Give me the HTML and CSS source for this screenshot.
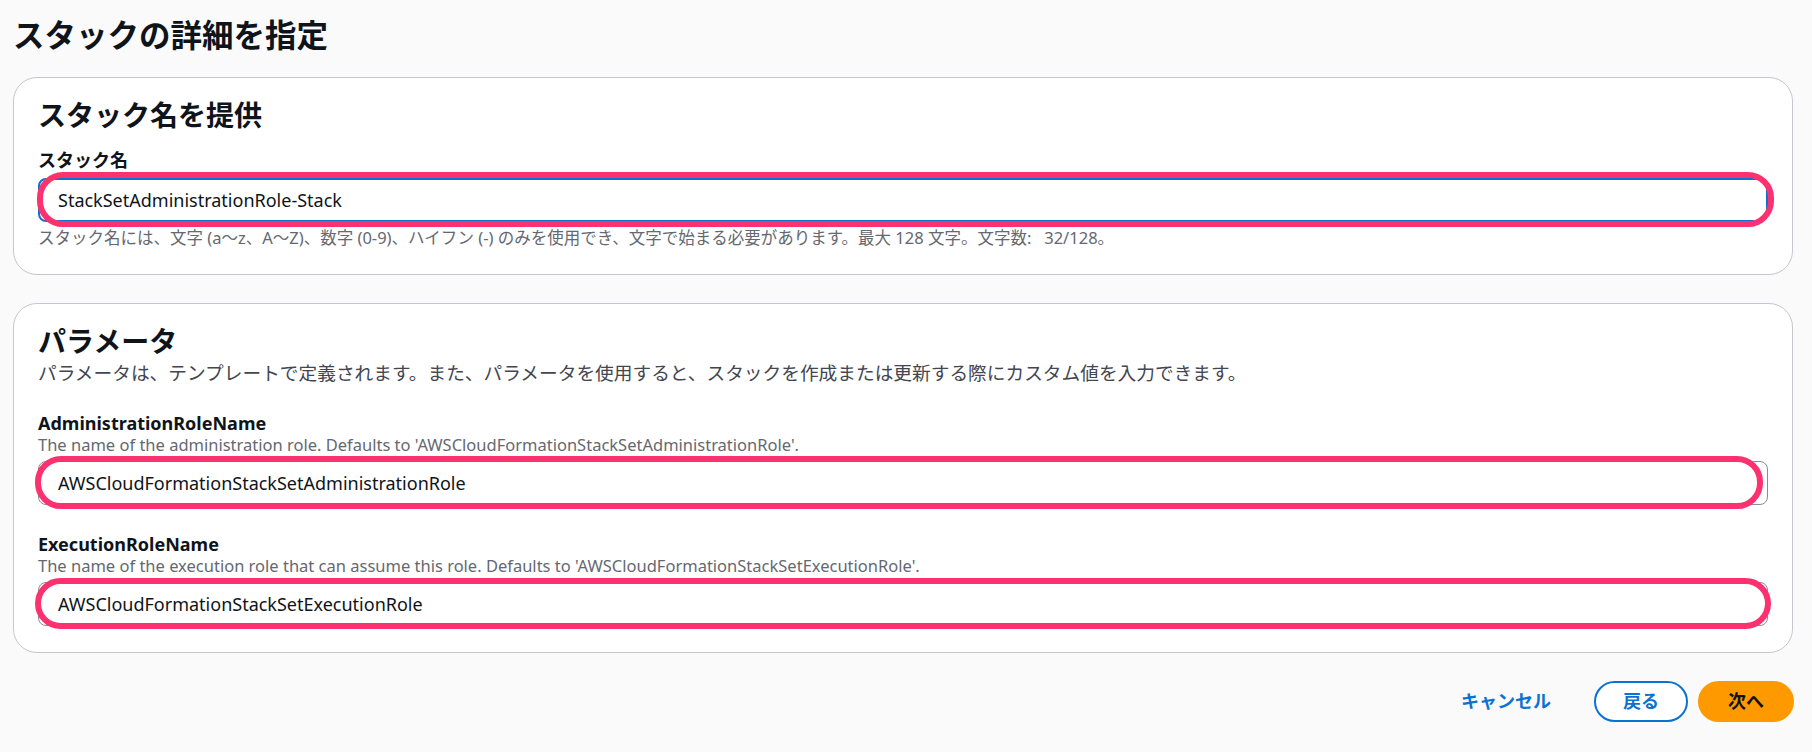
FILE: index.html
```html
<html>
  <head>
    <meta charset="utf-8">
    <meta name="viewport" content="width=device-width, initial-scale=1.0"/>
    <link rel="stylesheet" href="styles.css">
  </head>
  <body>
    <div class="page">
      <h1 class="pageTitle">スタックの詳細を指定</h1>

      <section class="box">
        <h2 class="boxTitle">スタック名を提供</h2>
        <div class="field first">
          <p class="label">スタック名</p>
          <div class="inputWrap">
            <div class="input focused">StackSetAdministrationRole-Stack</div>
            <span class="mark markStack"></span>
          </div>
          <p class="constraint">スタック名には、文字 (a〜z、A〜Z)、数字 (0-9)、ハイフン (-) のみを使用でき、文字で始まる必要があります。最大 128 文字。文字数:&nbsp;&nbsp;&nbsp;32/128。</p>
        </div>
      </section>

      <section class="box">
        <h2 class="boxTitle">パラメータ</h2>
        <p class="boxDesc">パラメータは、テンプレートで定義されます。また、パラメータを使用すると、スタックを作成または更新する際にカスタム値を入力できます。</p>
        <div class="field param">
          <p class="label">AdministrationRoleName</p>
          <p class="hint">The name of the administration role. Defaults to 'AWSCloudFormationStackSetAdministrationRole'.</p>
          <div class="inputWrap">
            <div class="input">AWSCloudFormationStackSetAdministrationRole</div>
            <span class="mark markAdmin"></span>
          </div>
        </div>
        <div class="field param">
          <p class="label">ExecutionRoleName</p>
          <p class="hint">The name of the execution role that can assume this role. Defaults to 'AWSCloudFormationStackSetExecutionRole'.</p>
          <div class="inputWrap">
            <div class="input">AWSCloudFormationStackSetExecutionRole</div>
            <span class="mark markExec"></span>
          </div>
        </div>
      </section>

      <div class="actions">
        <span class="btn linkBtn">キャンセル</span>
        <span class="btn normalBtn">戻る</span>
        <span class="btn primaryBtn">次へ</span>
      </div>
    </div>
  </body>
</html>
```

FILE: styles.css
```css
* {
  padding: 0;
  margin: 0;
  box-sizing: border-box;
}
body {
  background-color: #fafafa;
  color: #0f141a;
  font-family: "Noto Sans", "Noto Sans CJK JP", sans-serif;
}
.page {
  padding: 15px 19px 0 13px;
}
.pageTitle {
  font-size: 31.5px;
  line-height: 40px;
  font-weight: bold;
  margin-bottom: 22px;
}
.box {
  background-color: #fff;
  border: 1px solid #c6c6cd;
  border-radius: 24px;
  padding: 19px 24px 26px;
  margin-bottom: 28px;
}
.boxTitle {
  font-size: 28px;
  line-height: 36px;
  font-weight: bold;
}
.boxDesc {
  margin-top: 2px;
  font-size: 18.7px;
  line-height: 24px;
  color: #424650;
}
.label {
  font-size: 18px;
  line-height: 24px;
  font-weight: bold;
}
.field.first {
  margin-top: 15px;
}
.field.param {
  margin-top: 27px;
}
.boxDesc + .field.param {
  margin-top: 26px;
}
.hint,
.constraint {
  font-size: 16.5px;
  line-height: 20px;
  color: #656871;
}
.constraint {
  margin-top: 6px;
}
.inputWrap {
  position: relative;
  margin-top: 6px;
}
.input {
  height: 44px;
  line-height: 42px;
  padding: 0 19px;
  font-size: 18px;
  border: 1px solid #8c8c94;
  border-radius: 8px;
  background-color: #fff;
}
.input.focused {
  border: 2px solid #0972d3;
  line-height: 40px;
  padding: 0 18px;
}

/* pink annotation frames drawn over the inputs */
.mark {
  position: absolute;
  border: 6px solid #fe3170;
  border-radius: 26px;
  pointer-events: none;
}
.markStack {
  top: -6px;
  bottom: -5px;
  left: -1px;
  right: -6px;
}
.markAdmin {
  top: -5px;
  bottom: -4px;
  left: -3px;
  right: 5px;
}
.markExec {
  top: -4px;
  bottom: -3px;
  left: -3px;
  right: -3px;
}

.actions {
  display: flex;
  justify-content: flex-end;
  align-items: center;
  gap: 10px;
  margin-right: -1px;
}
.btn {
  display: inline-block;
  height: 41px;
  line-height: 37px;
  border: 2px solid transparent;
  border-radius: 21px;
  font-size: 18px;
  font-weight: bold;
  cursor: pointer;
}
.linkBtn {
  padding: 0 20px;
  margin-right: 11px;
  color: #0972d3;
}
.normalBtn {
  padding: 0 27px;
  color: #0972d3;
  border-color: #0972d3;
  background-color: #fff;
}
.primaryBtn {
  padding: 0 28px;
  background-color: #ff9900;
  border-color: #ff9900;
  color: #0f141a;
}
```
